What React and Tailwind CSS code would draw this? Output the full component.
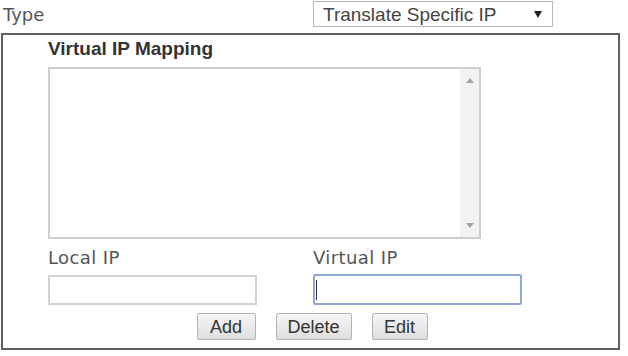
import React from "react";

function Btn({ children, w }) {
  return (
    <button
      className={`${w} h-[27px] font-['Liberation_Sans',Arial,sans-serif] text-[18px] leading-none text-[#333] border border-[#b4b4b4] rounded-[2px] bg-gradient-to-b from-[#f6f6f6] to-[#dedede] flex items-center justify-center`}
    >
      {children}
    </button>
  );
}

export default function App() {
  return (
    <div className="w-[628px] h-[356px] bg-white overflow-hidden font-['DejaVu_Sans',Verdana,sans-serif]">
      <div className="flex h-[33px]">
        <div className="w-[313px] pl-[3px] pt-[4px] text-[18px] leading-[22px] text-[#555]">
          Type
        </div>
        <div className="mt-[1px] w-[240px] h-[26px] border border-[#b9b9b9] flex items-center pl-[9px] pr-[10px]">
          <span className="font-['Liberation_Sans',Arial,sans-serif] text-[19px] leading-none text-[#444] flex-1">
            Translate Specific IP
          </span>
          <svg width="8" height="7" viewBox="0 0 8 7">
            <polygon points="0,0 8,0 4,7" fill="#222" />
          </svg>
        </div>
      </div>
      <div className="ml-[1px] w-[619px] h-[317px] border-2 border-[#5e5e5e] pl-[45px] pt-[3px]">
        <div className="font-['Liberation_Sans',Arial,sans-serif] text-[19px] leading-[22px] font-bold text-[#333]">
          Virtual IP Mapping
        </div>
        <div className="mt-[7px] w-[433px] h-[172px] border-2 border-[#cfcfcf] flex">
          <div className="flex-1" />
          <div className="w-[19px] bg-[#f2f2f2] flex flex-col items-center justify-between pt-[9px] pb-[9px]">
            <svg width="8" height="5" viewBox="0 0 8 5">
              <polygon points="0,5 8,5 4,0" fill="#a6a6a6" />
            </svg>
            <svg width="8" height="5" viewBox="0 0 8 5">
              <polygon points="0,0 8,0 4,5" fill="#a6a6a6" />
            </svg>
          </div>
        </div>
        <div className="flex mt-[8px]">
          <div className="w-[265px]">
            <div className="text-[18px] leading-[22px] text-[#555] tracking-[0.4px]">
              Local IP
            </div>
            <div className="mt-[6px] w-[209px] h-[30px] border-2 border-[#d2d2d2]" />
          </div>
          <div>
            <div className="text-[18px] leading-[22px] text-[#555] tracking-[0.4px]">
              Virtual IP
            </div>
            <div className="mt-[5px] w-[209px] h-[31px] border-2 border-[#8fa7d6] rounded-[2px] flex items-center pl-[1px]">
              <div className="w-[1px] h-[20px] bg-[#333]" />
            </div>
          </div>
        </div>
        <div className="-ml-[45px] mt-[8px] flex justify-center gap-[20px] pl-[3px]">
          <Btn w="w-[59px]">Add</Btn>
          <Btn w="w-[76px]">Delete</Btn>
          <Btn w="w-[56px]">Edit</Btn>
        </div>
      </div>
    </div>
  );
}
